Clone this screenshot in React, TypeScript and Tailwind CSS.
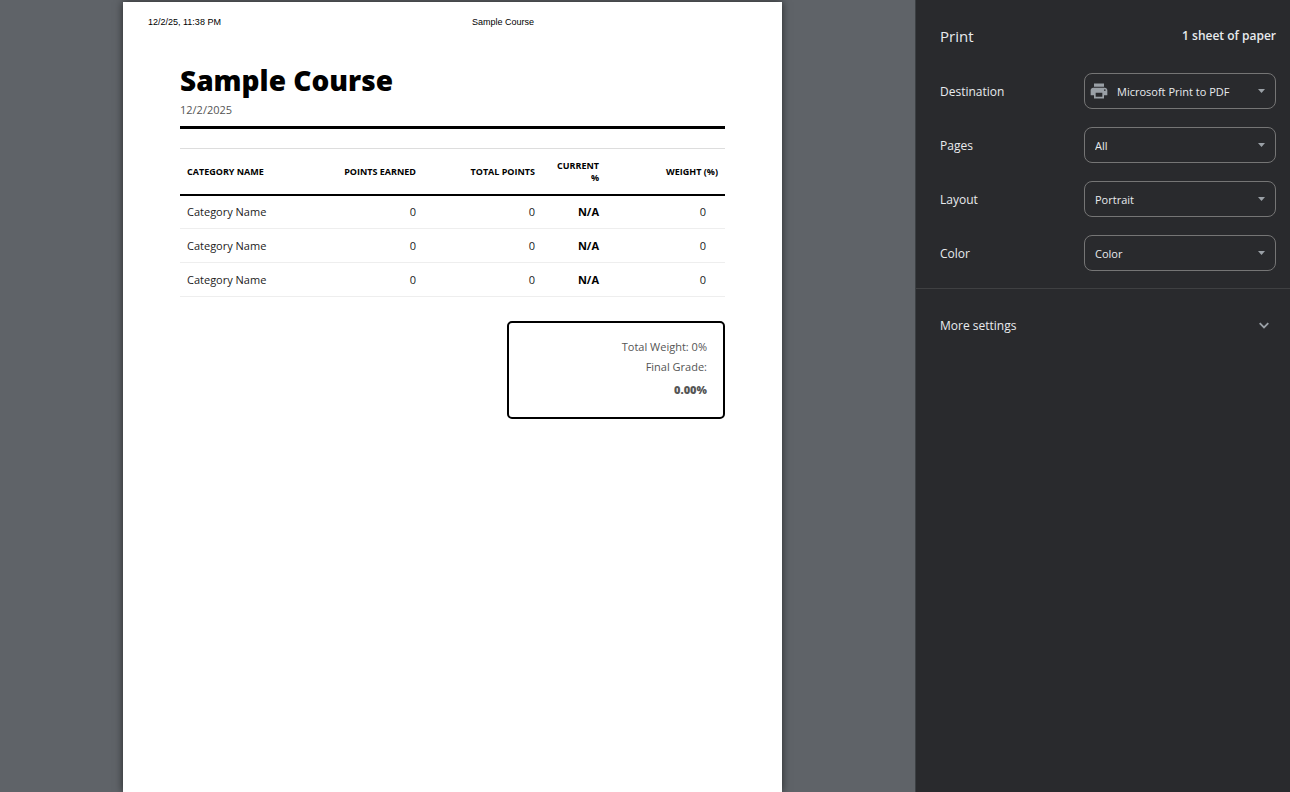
import { FC, ReactNode } from "react";

type Category = {
  id: number;
  name: string;
  earned: number;
  total: number;
  current: string;
  weight: number;
};
type Setting = {
  id: string;
  label: string;
  options: string[];
  icon?: ReactNode;
};

const PrinterIcon: FC = () => (
  <svg viewBox="0 0 24 24" className="size-5" fill="#9aa0a6" aria-hidden="true">
    <path d="M19 8H5c-1.66 0-3 1.34-3 3v6h4v4h12v-4h4v-6c0-1.66-1.34-3-3-3zm-3 11H8v-5h8v5zm3-7c-.55 0-1-.45-1-1s.45-1 1-1 1 .45 1 1-.45 1-1 1zm-1-9H6v4h12V3z" />
  </svg>
);

const categories: Category[] = [
  { id: 1, name: "Category Name", earned: 0, total: 0, current: "N/A", weight: 0 },
  { id: 2, name: "Category Name", earned: 0, total: 0, current: "N/A", weight: 0 },
  { id: 3, name: "Category Name", earned: 0, total: 0, current: "N/A", weight: 0 },
];

const settings: Setting[] = [
  {
    id: "destination",
    label: "Destination",
    options: ["Microsoft Print to PDF", "Save as PDF"],
    icon: <PrinterIcon />,
  },
  { id: "pages", label: "Pages", options: ["All", "Custom"] },
  { id: "layout", label: "Layout", options: ["Portrait", "Landscape"] },
  { id: "color", label: "Color", options: ["Color", "Black and white"] },
];

const SettingRow: FC<{ setting: Setting }> = ({ setting }) => (
  <div className="flex items-center justify-between">
    <label htmlFor={setting.id} className="pt-0.5 text-xs">
      {setting.label}
    </label>
    <div className="relative w-48">
      <select
        id={setting.id}
        className={`h-9 w-full appearance-none rounded-lg border border-[#757575] bg-transparent pt-0.5 pr-6 text-[11px] ${
          setting.icon ? "pl-8" : "pl-2.5"
        }`}
      >
        {setting.options.map((option) => (
          <option key={option} className="bg-[#292a2d]">
            {option}
          </option>
        ))}
      </select>
      {setting.icon && (
        <span className="pointer-events-none absolute top-2 left-[5px]">
          {setting.icon}
        </span>
      )}
      <svg
        viewBox="0 0 7 4"
        className="pointer-events-none absolute top-4 right-[11px] h-1 w-[7px]"
        fill="#9aa0a6"
        aria-hidden="true"
      >
        <path d="M0 0h7L3.5 4z" />
      </svg>
    </div>
  </div>
);

const GradeTable: FC = () => (
  <table className="mt-[19px] w-full table-fixed border-collapse text-right">
    <colgroup>
      <col />
      <col className="w-[119px]" />
      <col className="w-[119px]" />
      <col className="w-16" />
      <col className="w-[119px]" />
    </colgroup>
    <thead>
      <tr className="h-[46px] border-t border-b-2 border-t-[#dddddd] border-b-black text-[9px] leading-3 font-bold uppercase">
        <th className="px-[7px] pt-0.5 text-left">Category Name</th>
        <th className="px-[7px] pt-0.5">Points Earned</th>
        <th className="px-[7px] pt-0.5">Total Points</th>
        <th className="px-[7px] pt-0.5">Current %</th>
        <th className="px-[7px] pt-0.5">Weight (%)</th>
      </tr>
    </thead>
    <tbody>
      {categories.map((category) => (
        <tr
          key={category.id}
          className="h-[34px] border-b border-[#eeeeee] text-[11px] leading-4"
        >
          <td className="px-[7px] text-left font-medium text-[#222222]">
            {category.name}
          </td>
          <td className="px-[7px] font-medium text-[#222222]">
            {category.earned}
          </td>
          <td className="px-[7px] text-[#222222]">{category.total}</td>
          <td className="px-[7px] font-bold">{category.current}</td>
          <td className="pr-[19px] text-[#222222]">{category.weight}</td>
        </tr>
      ))}
    </tbody>
  </table>
);

const PaperSheet: FC = () => (
  <article className="w-full max-w-[659px] bg-white text-black shadow-[0_0_8px_rgba(0,0,0,0.6)]">
    <header className="flex gap-7 px-[25px] pt-3.5 font-['Liberation_Sans',Arial,sans-serif] text-[9px] leading-3">
      <span>12/2/25, 11:38 PM</span>
      <span className="grow text-center">Sample Course</span>
    </header>
    <div className="px-[57px] pt-8">
      <div className="border-b-3 border-black pb-2">
        <h1 className="text-[28px] leading-10 font-extrabold">Sample Course</h1>
        <p className="mt-0.5 text-[11px] leading-4 text-[#555555]">12/2/2025</p>
      </div>
      <GradeTable />
      <section className="mt-6 ml-auto w-2/5 rounded-[5px] border-2 border-black px-4 pt-[14px] pb-3.5 text-right text-[11px] leading-5 text-[#555555]">
        <p>Total Weight: 0%</p>
        <p>Final Grade:</p>
        <p className="leading-[26px] font-extrabold">0.00%</p>
      </section>
    </div>
  </article>
);

const PrintPanel: FC = () => (
  <aside className="w-[375px] shrink-0 border-l border-[#3c4043] bg-[#292a2d] text-[#e8eaed]">
    <header className="flex items-center justify-between pt-6 pr-3.5 pb-[25px] pl-6 leading-6">
      <h2 className="text-[15px]">Print</h2>
      <span className="text-xs font-semibold">1 sheet of paper</span>
    </header>
    <div className="flex flex-col gap-[18px] border-b border-[#3f4042] pr-3.5 pb-[17px] pl-6">
      {settings.map((setting) => (
        <SettingRow key={setting.id} setting={setting} />
      ))}
    </div>
    <button
      type="button"
      className="flex h-18 w-full items-center justify-between pt-0.5 pr-5 pl-6 text-xs"
    >
      More settings
      <svg
        viewBox="0 0 12 12"
        className="size-3"
        fill="none"
        stroke="#9aa0a6"
        strokeWidth="1.8"
        aria-hidden="true"
      >
        <path d="M1.7 3.2 6 7.5l4.3-4.3" />
      </svg>
    </button>
  </aside>
);

export default function App() {
  return (
    <div className="flex min-h-screen bg-[#5f6368] font-['Open_Sans','Segoe_UI',sans-serif]">
      <main className="flex grow justify-center pt-0.5 pr-2.5">
        <PaperSheet />
      </main>
      <PrintPanel />
    </div>
  );
}
